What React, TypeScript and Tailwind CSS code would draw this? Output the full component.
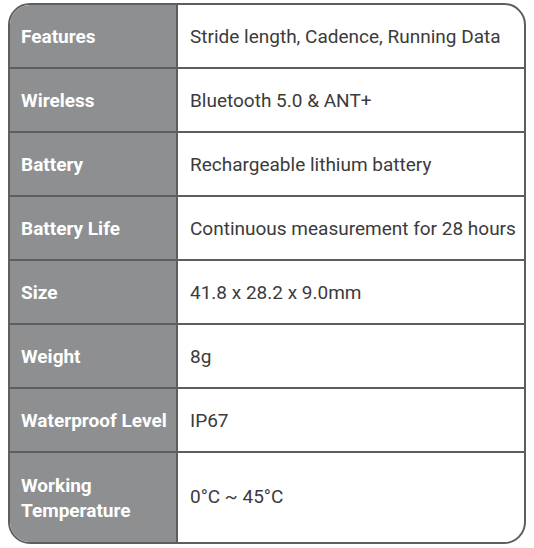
const specs: { label: string; value: string }[] = [
  { label: 'Features', value: 'Stride length, Cadence, Running Data' },
  { label: 'Wireless', value: 'Bluetooth 5.0 & ANT+' },
  { label: 'Battery', value: 'Rechargeable lithium battery' },
  { label: 'Battery Life', value: 'Continuous measurement for 28 hours' },
  { label: 'Size', value: '41.8 x 28.2 x 9.0mm' },
  { label: 'Weight', value: '8g' },
  { label: 'Waterproof Level', value: 'IP67' },
];

export default function App() {
  return (
    <div className="w-[534px] h-[548px] bg-white pt-[3px] pl-[8px] font-['Roboto',sans-serif]">
      <div className="w-[518px] h-[541px] flex flex-col border-2 border-[#5e5e5e] rounded-[22px] overflow-hidden">
        {specs.map((s) => (
          <div key={s.label} className="grid grid-cols-[168px_1fr] h-16 border-b-2 border-[#5e5e5e]">
            <div className="bg-[#8e8f91] border-r-2 border-[#5e5e5e] flex items-center pl-[11px] pt-[2px] text-white font-bold text-[19px]">
              {s.label}
            </div>
            <div className="flex items-center pl-[12px] pt-[2px] text-[#3b3b3b] text-[19px]">{s.value}</div>
          </div>
        ))}
        <div className="grid grid-cols-[168px_1fr] flex-1">
          <div className="bg-[#8e8f91] border-r-2 border-[#5e5e5e] flex items-center pl-[11px] text-white font-bold text-[19px] leading-[25px]">
            Working
            <br />
            Temperature
          </div>
          <div className="flex items-center pl-[12px] text-[#3b3b3b] text-[19px]">0°C ~ 45°C</div>
        </div>
      </div>
    </div>
  );
}
